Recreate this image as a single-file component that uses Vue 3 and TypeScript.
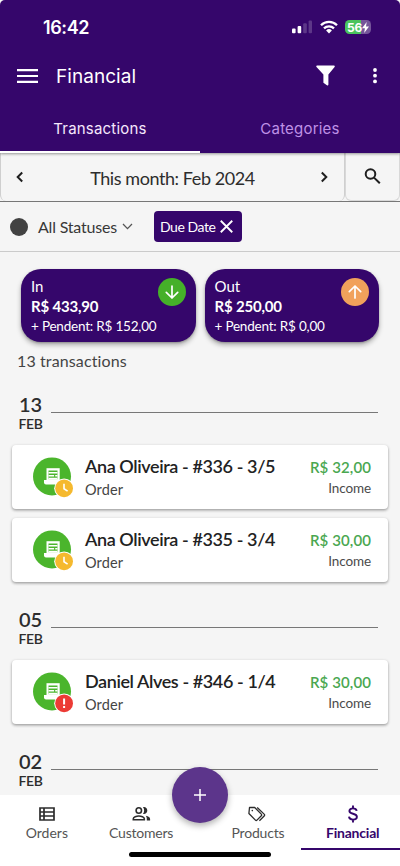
<script setup lang="ts">
interface Summary { label: string; total: string; pending: string; kind: 'in' | 'out' }
interface Entry { title: string; type: string; amount: string; kind: string; status: 'pending' | 'late' }
interface Day { day: string; month: string; entries: Entry[] }
interface NavItem { id: string; label: string }

const summaries: Summary[] = [
  { label: 'In', total: 'R$ 433,90', pending: '+ Pendent: R$ 152,00', kind: 'in' },
  { label: 'Out', total: 'R$ 250,00', pending: '+ Pendent: R$ 0,00', kind: 'out' },
]

const days: Day[] = [
  {
    day: '13', month: 'FEB', entries: [
      { title: 'Ana Oliveira - #336 - 3/5', type: 'Order', amount: 'R$ 32,00', kind: 'Income', status: 'pending' },
      { title: 'Ana Oliveira - #335 - 3/4', type: 'Order', amount: 'R$ 30,00', kind: 'Income', status: 'pending' },
    ],
  },
  {
    day: '05', month: 'FEB', entries: [
      { title: 'Daniel Alves - #346 - 1/4', type: 'Order', amount: 'R$ 30,00', kind: 'Income', status: 'late' },
    ],
  },
  { day: '02', month: 'FEB', entries: [] },
]

const navItems: NavItem[] = [
  { id: 'orders', label: 'Orders' },
  { id: 'customers', label: 'Customers' },
  { id: 'products', label: 'Products' },
  { id: 'financial', label: 'Financial' },
]
</script>

<template>
  <div class="screen">
    <header class="header">
      <div class="status">
        <span class="clock">16:42</span>
        <div class="indicators">
          <svg class="signal" width="20" height="14" viewBox="0 0 20 14" fill="#fff">
            <rect x="0" y="8.5" width="3.6" height="4.8" rx="1" />
            <rect x="5.6" y="6" width="3.6" height="7.3" rx="1" />
            <rect x="11.2" y="3.2" width="3.6" height="10.1" rx="1" opacity=".2" />
            <rect x="16.6" y="0.5" width="3.4" height="12.8" rx="1" opacity=".2" />
          </svg>
          <svg class="wifi" width="18" height="14" viewBox="0 0 18 14">
            <g fill="none" stroke="#fff" stroke-width="2.3">
              <path d="M1 5.2a11.4 11.4 0 0 1 16 0" />
              <path d="M4 8.3a7.2 7.2 0 0 1 10 0" />
            </g>
            <path d="M9 13.4 6.1 10.4a4.2 4.2 0 0 1 5.8 0z" fill="#fff" />
          </svg>
          <div class="battery">
            <span>56</span>
            <svg width="7" height="11" viewBox="0 0 7 11"><path d="M4.7 0 0 6.2h2.9L2.2 11 7 4.6H4z" fill="#fff" /></svg>
          </div>
        </div>
      </div>
      <div class="toolbar">
        <svg width="21" height="14" viewBox="0 0 21 14" fill="#fff"><path d="M0 0h21v2.2H0zM0 5.9h21v2.2H0zM0 11.8h21V14H0z" /></svg>
        <h1>Financial</h1>
        <svg class="funnel" width="19" height="21" viewBox="0 0 19 21"><path d="M1 .5h17c.8 0 1 .8.6 1.4L12.4 9.5v10c0 .9-.8 1.3-1.5.8l-3.5-2.5V9.500L.5 1.900C0 1.300.3.5 1 .5z" fill="#fff" /></svg>
        <svg class="more" width="4" height="16" viewBox="0 0 4 16" fill="#fff"><circle cx="2" cy="2" r="1.9" /><circle cx="2" cy="7.7" r="1.9" /><circle cx="2" cy="13.4" r="1.9" /></svg>
      </div>
      <nav class="tabs">
        <span class="tab active">Transactions</span>
        <span class="tab">Categories</span>
      </nav>
    </header>

    <section class="period">
      <div class="month">
        <svg width="8" height="12" viewBox="0 0 8 12"><path d="M6.2 1.5 1.7 6l4.5 4.5" /></svg>
        <span>This month: Feb 2024</span>
        <svg width="8" height="12" viewBox="0 0 8 12"><path d="M1.8 1.5 6.3 6l-4.5 4.5" /></svg>
      </div>
      <div class="search">
        <svg width="17" height="17" viewBox="0 0 17 17"><circle cx="6.5" cy="6" r="4.8" /><path d="m10 9.6 5.8 5.7" /></svg>
      </div>
    </section>

    <section class="filters">
      <span class="dot"></span>
      <span class="all">All Statuses</span>
      <svg class="caret" width="11" height="7" viewBox="0 0 11 7"><path d="m1 1 4.5 4.6L10 1" /></svg>
      <div class="chip">
        <span>Due Date</span>
        <svg width="13" height="13" viewBox="0 0 12 12"><path d="m.7.7 10.6 10.6M11.3.7.7 11.3" /></svg>
      </div>
    </section>

    <main class="content">
      <div class="summaries">
        <article v-for="s in summaries" :key="s.kind" class="summary">
          <div class="figures">
            <span class="label">{{ s.label }}</span>
            <strong>{{ s.total }}</strong>
            <span class="pending">{{ s.pending }}</span>
          </div>
          <span class="arrow" :class="s.kind">
            <svg width="16" height="16" viewBox="0 0 16 16">
              <path v-if="s.kind === 'in'" d="M8 2v12M2.3 8.3 8 14l5.7-5.7" />
              <path v-else d="M8 14V2M2.3 7.7 8 2l5.7 5.7" />
            </svg>
          </span>
        </article>
      </div>
      <p class="count">13 transactions</p>

      <section v-for="d in days" :key="d.day" class="group">
        <div class="date">
          <div class="stamp"><b>{{ d.day }}</b><span>{{ d.month }}</span></div>
          <i class="rule"></i>
        </div>
        <div class="entries">
          <article v-for="e in d.entries" :key="e.title" class="entry">
            <svg class="badge" width="42" height="42" viewBox="0 0 42 42">
              <circle cx="19" cy="19.4" r="19" fill="#4bb52c" />
              <path d="M13.5 11.2h13.2V26H13.5z" fill="#fff" />
              <path d="M15.5 13.5h9v8.7h-9z" fill="#4bb52c" />
              <path d="M15.5 15h9v1.6h-9zM15.5 18h5.6v1.4h-5.600zM22.200 18h2.300v1.400h-2.300zM15.500 20.800h9v1.600h-9z" fill="#fff" />
              <path d="M11 23.1h14v4.5H13a2 2 0 0 1-2-2z" fill="#fff" />
              <circle cx="31.1" cy="31.3" r="9.9" fill="#fff" />
              <template v-if="e.status === 'pending'">
                <circle cx="31.1" cy="31.3" r="8.9" fill="#f5b92e" />
                <path d="M31 26.7v5l3.6 2.4" fill="none" stroke="#fff" stroke-width="1.6" />
              </template>
              <template v-else>
                <circle cx="31.1" cy="31.3" r="8.9" fill="#ec3b35" />
                <path d="M31.1 26.5v5.9M31.1 34v2" fill="none" stroke="#fff" stroke-width="2" />
              </template>
            </svg>
            <div class="who">
              <span class="title">{{ e.title }}</span>
              <span class="type">{{ e.type }}</span>
            </div>
            <div class="value">
              <span class="amount">{{ e.amount }}</span>
              <span class="kind">{{ e.kind }}</span>
            </div>
          </article>
        </div>
      </section>
    </main>

    <footer class="bottom">
      <a v-for="n in navItems" :key="n.id" class="item" :class="n.id">
        <svg v-if="n.id === 'orders'" width="16" height="14" viewBox="0 0 16 14">
          <path d="M1 1h14v12H1zM5 1v12M1 5h14M1 9h14" fill="none" stroke="#2c2c2c" stroke-width="1.7" />
        </svg>
        <svg v-else-if="n.id === 'customers'" width="19" height="15" viewBox="0 0 19 15" fill="none" stroke="#2c2c2c" stroke-width="1.6">
          <circle cx="6.8" cy="4" r="2.7" />
          <path d="M1.3 13.2v-1c0-1.7 3.2-2.7 5.5-2.7s5.5 1 5.5 2.7v1z" />
          <path d="M11 .6c2-.7 4.3.8 4.3 3.4s-2.3 4-4.3 3.4c1.5-2 1.5-4.8 0-6.8zM13.8 9.3c2.7.6 4.3 1.5 4.3 3.2V14h-3.3v-1.6c0-1.3-.3-2.2-1-3.1z" fill="#2c2c2c" stroke="none" />
        </svg>
        <svg v-else-if="n.id === 'products'" width="19" height="16" viewBox="0 0 19 16" fill="none" stroke="#2c2c2c" stroke-width="1.3" stroke-linejoin="round">
          <path d="M1.5 1.5h5.2l6.6 6.6c.5.5.5 1.1 0 1.6L9 14.1c-.5.5-1.1.5-1.6 0L.9 7.5z" />
          <path d="m9.2 1.5 7.2 6.9c.4.4.4.9 0 1.3l-5 5" />
          <circle cx="4.3" cy="4.6" r=".8" fill="#2c2c2c" stroke="none" />
        </svg>
        <svg v-else width="10" height="17" viewBox="0 0 10 17" fill="none" stroke="#35066b" stroke-width="1.9">
          <path d="M5 0v3M5 14v3M8.7 5.4C8.3 3.7 7 2.9 5 2.9S1.4 3.9 1.4 5.5C1.4 9.2 8.9 7.3 8.9 11.3c0 1.7-1.6 2.8-3.9 2.8-2.4 0-3.8-1.1-4-2.9" />
        </svg>
        <span>{{ n.label }}</span>
      </a>
      <i class="home"></i>
      <button class="fab" aria-label="Add">
        <svg width="12" height="12" viewBox="0 0 12 12"><path d="M6 0v12M0 6h12" stroke="#fff" stroke-width="1.5" /></svg>
      </button>
    </footer>
  </div>
</template>

<style>
body { margin: 0; background: #fff; overflow: hidden; }
</style>

<style scoped>
* { box-sizing: border-box; }
svg { display: block; flex: none; }
.screen { width: 400px; height: 866px; display: flex; flex-direction: column; overflow: hidden; background: linear-gradient(#fff 10px, #f5f5f5 10px); font-family: Lato, sans-serif; color: #2d2d2d; }
.header { height: 153px; flex: none; background: #35066b; color: #fff; font-family: Inter, sans-serif; border-radius: 5px 5px 0 0; display: flex; flex-direction: column; box-shadow: 0 1px 3px #0006; z-index: 1; }
.status { height: 54px; display: flex; justify-content: space-between; padding: 1px 29px 0 43px; align-items: center; }
.clock { font-size: 18px; font-weight: 600; letter-spacing: -.4px; }
.indicators { display: flex; align-items: center; }
.wifi { margin: 0 7px 0 8px; }
.battery { width: 26px; height: 14px; border-radius: 4.5px; background: linear-gradient(90deg, #4ac45d 60%, #75559a 60%); display: flex; align-items: center; justify-content: center; font-size: 12px; font-weight: 700; letter-spacing: -.3px; }
.toolbar { height: 48px; display: flex; align-items: center; padding: 0 23px 4px 17px; }
.toolbar { padding-bottom: 3px; }
h1 { margin: 3px 0 0 18px; font-size: 19px; font-weight: 400; letter-spacing: .05px; line-height: 40px; }
.funnel { margin-left: auto; }
.more { margin-left: 38px; }
.tabs { display: flex; flex: 1; }
.tab { flex: 1; padding-top: 5px; text-align: center; font-size: 15px; line-height: 45px; letter-spacing: .2px; color: #bf91e6; }
.tab.active { color: #f5e8fc; border-bottom: 2px solid #fff; }
.period { height: 49px; flex: none; display: flex; border-bottom: 1px solid #777; }
.month { width: 345px; border: 1px solid #cfcfcf; border-width: 0 1.5px 0 1px; border-radius: 0 0 6px 6px; display: flex; align-items: center; justify-content: space-between; padding: 0 16px 0 15px; font-size: 18px; letter-spacing: -.42px; }
.month span { padding: 2px 0 0 1px; }
.month svg, .search svg { fill: none; stroke: #1f1f1f; stroke-width: 2; }
.search { flex: 1; display: flex; align-items: center; justify-content: center; border: 1px solid #d8d8d8; border-top: 0; border-radius: 0 0 6px 6px; }
.filters { height: 50px; flex: none; display: flex; align-items: center; padding-left: 10px; border-bottom: 1px solid #cbcbcb; }
.dot { width: 18px; height: 18px; border-radius: 50%; background: #424242; margin-right: 10px; }
.all { width: 79px; font-size: 16px; color: #383838; letter-spacing: -.2px; white-space: nowrap; }
.caret { margin-left: 5px; fill: none; stroke: #555; stroke-width: 1.3; }
.chip { margin-left: 21px; width: 88px; height: 31px; border-radius: 4px; background: #35066b; color: #fff; display: flex; align-items: center; justify-content: space-between; padding: 0 9px 0 6px; font-size: 14px; letter-spacing: -.45px; white-space: nowrap; }
.chip svg { stroke: #fff; stroke-width: 1.7; }
.content { flex: 1; min-height: 0; overflow: hidden; padding-top: 17px; }
.summaries { display: flex; gap: 9px; padding: 0 21px; }
.summary { width: 174.5px; height: 73px; border-radius: 20px; background: #35066b; color: #fff; box-shadow: 0 3px 5px #0000004d, 0 1px 2px #0003; display: flex; justify-content: space-between; padding: 8px 10px; }
.figures { display: flex; flex-direction: column; white-space: nowrap; width: 126px; min-width: 0; }
.label { font-size: 15px; line-height: 19px; }
strong { font-size: 15px; line-height: 21px; letter-spacing: -.2px; }
.pending { font-size: 13.5px; line-height: 18px; letter-spacing: -.2px; }
.arrow { width: 28px; height: 28px; margin-top: 1px; border-radius: 50%; display: flex; align-items: center; justify-content: center; background: #45b029; flex: none; }
.arrow.out { background: #f1a15b; }
.arrow svg { fill: none; stroke: #fff; stroke-width: 1.7; stroke-linecap: round; stroke-linejoin: round; }
.count { margin: 8px 0 1px 17px; font-size: 16px; line-height: 22px; letter-spacing: .12px; color: #444; }
.group { padding: 21px 12px 6px; }
.date { height: 51px; display: flex; padding-left: 6px; }
.stamp { width: 25px; margin-top: -1px; display: flex; flex-direction: column; align-items: center; }
.stamp b { font-size: 20px; line-height: 23px; font-weight: 600; }
.stamp span { font-size: 14px; line-height: 16px; font-weight: 600; letter-spacing: -.3px; }
.rule { width: 327px; height: 1px; background: #777; margin: 18px 0 0 8px; }
.entries { display: flex; flex-direction: column; gap: 9px; }
.entry { height: 64px; width: 375.5px; background: #fff; border-radius: 4px; box-shadow: 0 1px 3px #00000052, 0 2px 3px #00000018; display: flex; padding: 0 16.5px 0 21px; }
.badge { margin-top: 12px; }
.who { margin-left: 10px; display: flex; flex-direction: column; white-space: nowrap; }
.title { margin-top: 9px; font-size: 18px; line-height: 24px; font-weight: 600; color: #222; letter-spacing: -.4px; }
.type { font-size: 14.5px; line-height: 24px; color: #444; letter-spacing: .1px; }
.value { margin-left: auto; display: flex; flex-direction: column; align-items: flex-end; white-space: nowrap; }
.amount { margin-top: 11px; font-size: 15px; line-height: 22px; font-weight: 600; color: #49a750; letter-spacing: .1px; }
.kind { font-size: 13.5px; line-height: 20px; color: #4b4b4b; letter-spacing: -.1px; }
.bottom { height: 71px; flex: none; position: relative; background: #fff; display: flex; justify-content: space-between; }
.item { display: flex; flex-direction: column; align-items: center; font-size: 14px; letter-spacing: -.2px; color: #555; width: 94px; }
.item svg { height: 18px; margin-top: 10px; }
.item span { line-height: 20px; }
.orders { letter-spacing: 0; padding-left: 1px; }
.customers { padding-left: 4px; }
.products { margin-left: 23px; padding-left: 6px; }
.financial { width: 100px; height: 55px; color: #35066b; font-weight: 700; border-bottom: 2px solid #35066b; padding-left: 4px; }
.home { position: absolute; left: 129px; top: 57px; width: 142px; height: 5px; border-radius: 3px; background: #000; }
.fab { position: absolute; left: 172px; top: -28px; width: 56px; height: 56px; border: 0; border-radius: 50%; padding: 0; background: #5c358b; display: flex; align-items: center; justify-content: center; box-shadow: 0 3px 6px #0000004d; }
</style>
